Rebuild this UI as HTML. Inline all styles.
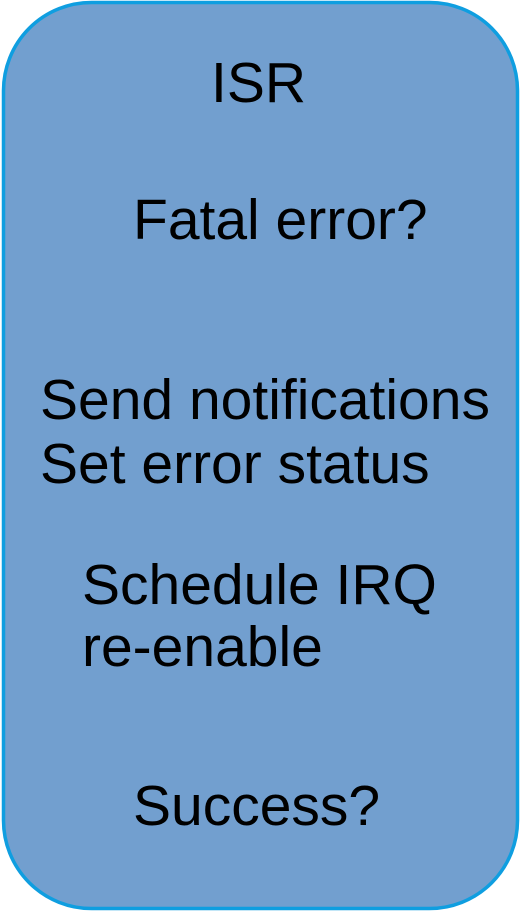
<!DOCTYPE html>
<html><head><meta charset="utf-8"><style>
html,body{margin:0;padding:0;width:521px;height:911px;background:#fff;overflow:hidden}
</style></head><body>
<svg width="521" height="911" xmlns="http://www.w3.org/2000/svg">
<rect x="3.5" y="2.5" width="514" height="906" rx="88" ry="88" fill="#729fcf" stroke="#0f9ee0" stroke-width="3.5"/>
<g font-family="Liberation Sans, Arial, sans-serif" font-size="57" fill="#000">
<text x="211" y="102">ISR</text>
<text x="133" y="239">Fatal error?</text>
<text x="40" y="419">Send notifications</text>
<text x="40" y="483">Set error status</text>
<text x="82" y="604">Schedule IRQ</text>
<text x="82" y="666">re-enable</text>
<text x="133" y="825">Success?</text>
</g>
</svg>
</body></html>
